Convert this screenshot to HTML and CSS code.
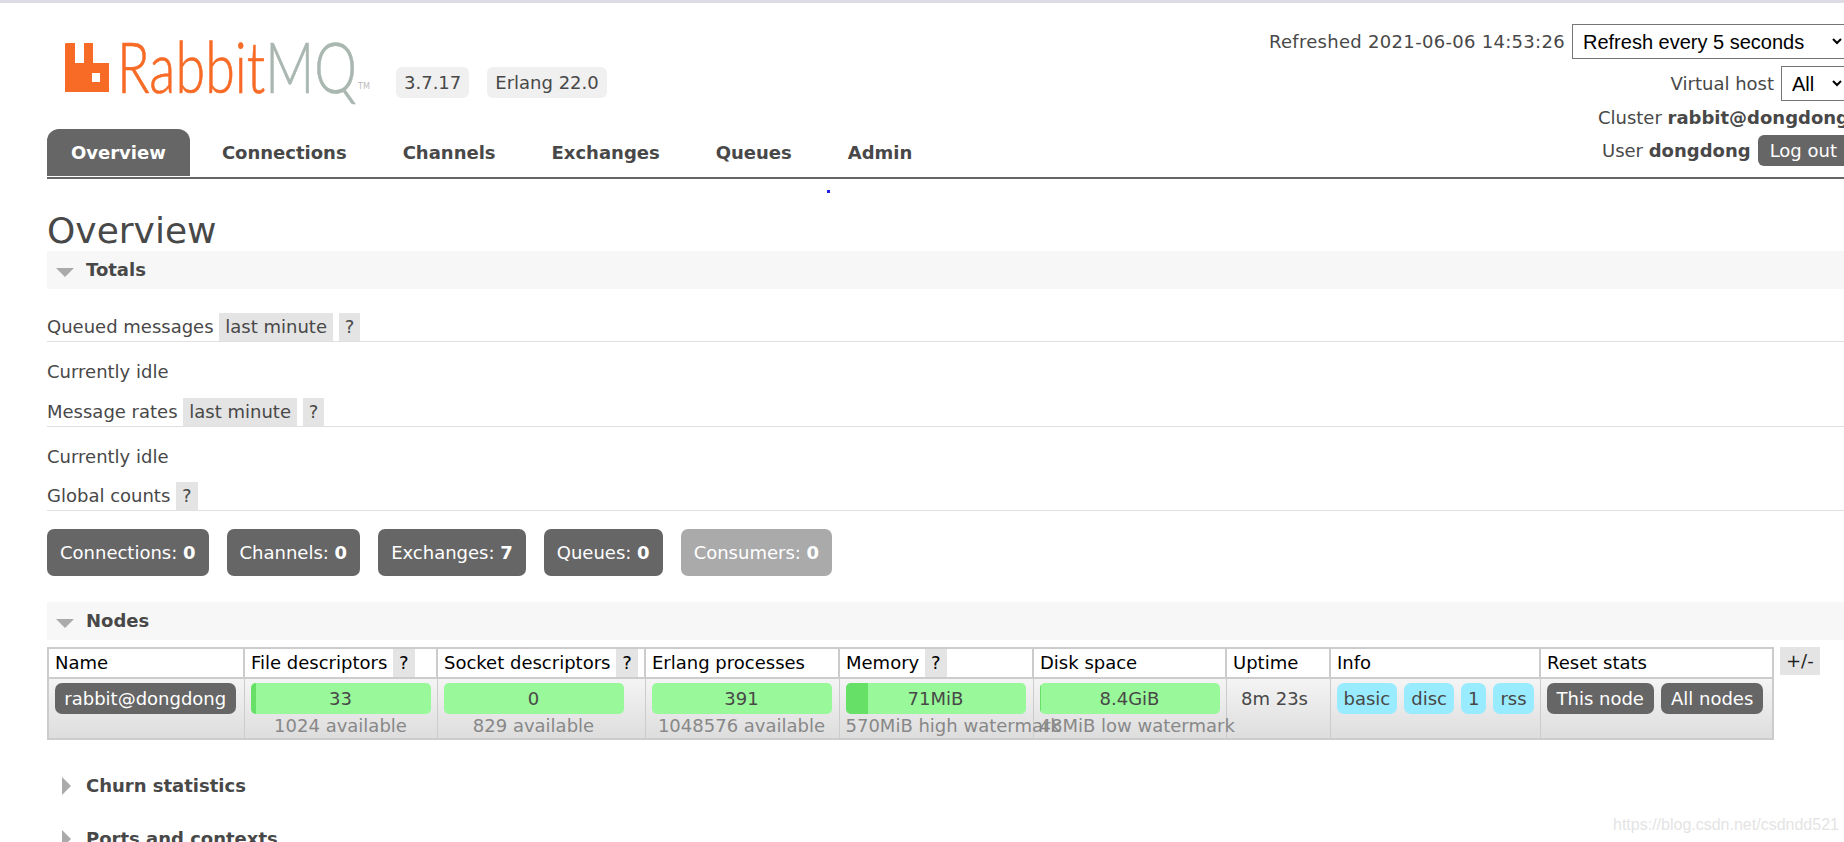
FILE: index.html
```html
<!DOCTYPE html>
<html lang="en">
<head>
    <meta charset="UTF-8">
    <title>RabbitMQ Management</title>
    <link rel="stylesheet" href="styles.css">
</head>
<body>
    <div class="page">
        <div class="header">
            <div class="brand">
                <div class="logo">
                    <svg class="logo-icon" width="44" height="50" viewBox="0 0 44 50">
                        <path fill="#f76b26" fill-rule="evenodd" d="M1 1h9v20h9V1h9v20h16v29H0V2zM27 31v9h8v-9z"/>
                    </svg>
                    <span class="logo-text"><span class="logo-word">Rabbit</span><span class="logo-word logo-mq">MQ</span></span>
                    <span class="logo-tm">TM</span>
                </div>
                <span class="version">3.7.17</span>
                <span class="version">Erlang 22.0</span>
            </div>
            <div class="status">
                <div class="status-row refresh-row">Refreshed 2021-06-06 14:53:26
                    <select class="refresh-select"><option>Refresh every 5 seconds</option></select>
                </div>
                <div class="status-row vhost-row">Virtual host
                    <select class="vhost-select"><option>All</option></select>
                </div>
                <div class="status-row cluster-row"><span>Cluster <b>rabbit@dongdong</b></span></div>
                <div class="status-row user-row"><span>User <b>dongdong</b></span>
                    <button class="logout">Log out</button>
                </div>
            </div>
        </div>

        <ul class="tabs">
            <li class="tab active">Overview</li>
            <li class="tab">Connections</li>
            <li class="tab">Channels</li>
            <li class="tab">Exchanges</li>
            <li class="tab">Queues</li>
            <li class="tab">Admin</li>
        </ul>
        <div class="dot-row"><span class="dot"></span></div>

        <h1>Overview</h1>

        <div class="section-head open">Totals</div>
        <div class="totals">
            <h3 class="sub-head">Queued messages <span class="chip">last minute</span> <span class="chip help">?</span></h3>
            <p class="idle">Currently idle</p>
            <h3 class="sub-head">Message rates <span class="chip">last minute</span> <span class="chip help">?</span></h3>
            <p class="idle">Currently idle</p>
            <h3 class="sub-head">Global counts <span class="chip help">?</span></h3>
            <div class="counts">
                <span class="count">Connections: <b>0</b></span>
                <span class="count">Channels: <b>0</b></span>
                <span class="count">Exchanges: <b>7</b></span>
                <span class="count">Queues: <b>0</b></span>
                <span class="count faded">Consumers: <b>0</b></span>
            </div>
        </div>

        <div class="section-head open">Nodes</div>
        <div class="nodes">
            <table class="node-table">
                <colgroup>
                    <col class="c-name"><col class="c-file"><col class="c-socket"><col class="c-erl">
                    <col class="c-mem"><col class="c-disk"><col class="c-up"><col class="c-info"><col class="c-reset">
                </colgroup>
                <tr>
                    <th>Name</th>
                    <th>File descriptors <span class="chip help">?</span></th>
                    <th>Socket descriptors <span class="chip help">?</span></th>
                    <th>Erlang processes</th>
                    <th>Memory <span class="chip help">?</span></th>
                    <th>Disk space</th>
                    <th>Uptime</th>
                    <th>Info</th>
                    <th>Reset stats</th>
                </tr>
                <tr>
                    <td><span class="node-name">rabbit@dongdong</span></td>
                    <td>
                        <div class="bar"><span class="bar-fill" style="width: 3%"></span><span class="bar-label">33</span></div>
                        <div class="sub">1024 available</div>
                    </td>
                    <td>
                        <div class="bar"><span class="bar-label">0</span></div>
                        <div class="sub">829 available</div>
                    </td>
                    <td>
                        <div class="bar"><span class="bar-label">391</span></div>
                        <div class="sub">1048576 available</div>
                    </td>
                    <td>
                        <div class="bar"><span class="bar-fill" style="width: 12.5%"></span><span class="bar-label">71MiB</span></div>
                        <div class="sub nowrap">570MiB high watermark</div>
                    </td>
                    <td>
                        <div class="bar"><span class="bar-fill" style="width: 0.6%"></span><span class="bar-label">8.4GiB</span></div>
                        <div class="sub nowrap">48MiB low watermark</div>
                    </td>
                    <td class="uptime">8m 23s</td>
                    <td>
                        <div class="tags"><span class="tag">basic</span><span class="tag">disc</span><span class="tag">1</span><span class="tag">rss</span></div>
                    </td>
                    <td>
                        <div class="resets"><button class="reset">This node</button><button class="reset">All nodes</button></div>
                    </td>
                </tr>
            </table>
            <span class="chip columns">+/-</span>
        </div>

        <div class="section-head closed">Churn statistics</div>
        <div class="section-head closed">Ports and contexts</div>
    </div>
    <div class="watermark">https://blog.csdn.net/csdndd521</div>
</body>
</html>
```

FILE: styles.css
```css
* {
    box-sizing: border-box;
    margin: 0;
    padding: 0;
}

html, body {
    height: 842px;
    overflow: hidden;
}

body {
    background: #fff;
    border-top: 3px solid #dcdce4;
    color: #484848;
    font-family: "DejaVu Sans", sans-serif;
    font-size: 18px;
    position: relative;
}

.page {
    width: 1849px;
    padding-left: 47px;
}

/* header */
.header {
    display: flex;
    justify-content: space-between;
    height: 107px;
}

.brand {
    display: flex;
    align-items: flex-start;
    padding: 39px 0 0 18px;
}

.logo {
    display: flex;
    align-items: flex-start;
    width: 331px;
    height: 52px;
    position: relative;
}

.logo-icon {
    flex: none;
    margin-right: 8px;
}

.logo-text {
    display: block;
    white-space: nowrap;
    transform: scaleX(0.77);
    transform-origin: left top;
    margin-top: -1px;
}

.logo-word {
    font-family: "Lato", sans-serif;
    font-weight: 300;
    font-size: 70px;
    line-height: 50px;
    color: #f76b26;
    -webkit-text-stroke: 0.7px #f76b26;
}

.logo-word.logo-mq {
    color: #a9b7b0;
    -webkit-text-stroke: 0.7px #a9b7b0;
}

.logo-tm {
    font-size: 8px;
    line-height: 10px;
    color: #bbb;
    position: absolute;
    left: 293px;
    top: 40px;
}

.version {
    background: #f0f0f0;
    border-radius: 6px;
    height: 31px;
    line-height: 31px;
    padding: 0 8px;
    margin: 25px 18px 0 0;
    white-space: nowrap;
}

.status {
    display: flex;
    flex-direction: column;
    align-items: flex-end;
    padding-top: 21px;
}

.status-row {
    display: flex;
    flex: none;
    align-items: center;
    height: 35px;
    white-space: nowrap;
}

.refresh-row {
    letter-spacing: 0.3px;
}

.vhost-row {
    margin-top: 7px;
}

.cluster-row {
    height: 28px;
    margin-top: 2px;
}

.user-row {
    height: 31px;
    margin-top: 4px;
}

.status-row select {
    font-family: "Liberation Sans", sans-serif;
    font-size: 20px;
    letter-spacing: 0;
    color: #000;
    background: #fff;
    border: 1px solid #767676;
    border-radius: 0;
    height: 35px;
    padding-left: 6px;
    margin-left: 7px;
    margin-right: 3px;
}

.refresh-select {
    width: 274px;
}

.vhost-select {
    width: 65px;
}

.logout {
    background: #666;
    color: #fff;
    border: 0;
    border-radius: 6px;
    font: 18px "DejaVu Sans", sans-serif;
    height: 31px;
    padding: 0 12px;
    margin-left: 7px;
}

/* tabs */
.tabs {
    display: flex;
    list-style: none;
    height: 50px;
    border-bottom: 2px solid #666;
    margin-top: 19px;
    margin-right: 5px;
}

.tab {
    font-weight: bold;
    padding: 0 24px;
    margin-right: 8px;
    line-height: 48px;
    color: #484848;
}

.tab.active {
    background: #666;
    color: #fff;
    border-radius: 12px 12px 0 0;
    height: 47px;
}

.dot-row {
    height: 26px;
    position: relative;
}

.dot {
    position: absolute;
    left: 780px;
    top: 11px;
    width: 3px;
    height: 3px;
    background: #2020e0;
}

h1 {
    font-weight: normal;
    font-size: 36px;
    line-height: 40px;
    padding-top: 6px;
    color: #484848;
}

/* sections */
.section-head {
    font-weight: bold;
    height: 38px;
    line-height: 38px;
    padding-left: 39px;
    position: relative;
}

.section-head.open {
    background: #f7f7f7;
}

.section-head.open::before {
    content: "";
    position: absolute;
    left: 9px;
    top: 17px;
    border-left: 9px solid transparent;
    border-right: 9px solid transparent;
    border-top: 9px solid #aaa;
}

.section-head.closed::before {
    content: "";
    position: absolute;
    left: 15px;
    top: 10px;
    border-top: 9px solid transparent;
    border-bottom: 9px solid transparent;
    border-left: 9px solid #aaa;
}

.totals {
    padding-top: 24px;
}

.sub-head {
    font-weight: normal;
    font-size: 18px;
    height: 29px;
    line-height: 28px;
    border-bottom: 1px solid #e0e0e0;
}

.chip {
    display: inline-block;
    background: #e4e4e4;
    height: 28px;
    line-height: 28px;
    padding: 0 6px;
}

.idle {
    height: 42.5px;
    line-height: 60px;
    margin-bottom: 13px;
}

.counts {
    display: flex;
    gap: 18px;
    margin-top: 18px;
    margin-bottom: 26px;
}

.count {
    background: #666;
    color: #fff;
    border-radius: 7px;
    height: 47px;
    line-height: 47px;
    padding: 0 13px;
    white-space: nowrap;
}

.count.faded {
    background: #aaa;
}

/* nodes table */
.nodes {
    display: flex;
    align-items: flex-start;
    margin-top: 7px;
    margin-bottom: 27px;
}

.node-table {
    width: 1725px;
    table-layout: fixed;
    border-collapse: collapse;
    border: 2px solid #ccc;
}

.c-name { width: 196px; }
.c-file { width: 193px; }
.c-socket { width: 208px; }
.c-erl { width: 194px; }
.c-mem { width: 194px; }
.c-disk { width: 193px; }
.c-up { width: 104px; }
.c-info { width: 210px; }
.c-reset { width: 233px; }

.node-table th {
    font-weight: normal;
    color: #000;
    text-align: left;
    height: 29px;
    line-height: 28px;
    padding: 0 6px;
    white-space: nowrap;
    border: 1px solid #ccc;
    border-width: 0 2px 2px 0;
}

.node-table th .chip {
    vertical-align: top;
}

.node-table td {
    height: 59px;
    vertical-align: top;
    padding: 4px 6px 0;
    border-right: 1px solid #ccc;
    background: linear-gradient(#f4f4f4, #dddddd);
}

.node-name {
    display: block;
    background: #666;
    color: #fff;
    border-radius: 7px;
    height: 31px;
    line-height: 31px;
    margin-right: 2px;
    text-align: center;
}

.bar {
    background: #99f899;
    border-radius: 5px;
    width: 180px;
    height: 31px;
    line-height: 31px;
    text-align: center;
    position: relative;
    overflow: hidden;
}

.bar-fill {
    position: absolute;
    left: 0;
    top: 0;
    bottom: 0;
    background: #66e066;
}

.bar-label {
    position: relative;
}

.sub {
    color: #888;
    width: 180px;
    text-align: center;
    white-space: nowrap;
    line-height: 24px;
}

.sub.nowrap {
    text-align: left;
}

.node-table .uptime {
    text-align: center;
    line-height: 31px;
    padding-right: 13px;
}

.tags {
    display: flex;
    gap: 7px;
}

.tag {
    background: #99ebff;
    border-radius: 7px;
    height: 31px;
    line-height: 31px;
    padding: 0 7px;
}

.resets {
    display: flex;
    gap: 7px;
}

.reset {
    background: #666;
    color: #fff;
    border: 0;
    border-radius: 7px;
    height: 31px;
    font: 18px "DejaVu Sans", sans-serif;
    padding: 0 10px;
    white-space: nowrap;
}

.chip.columns {
    margin-left: 6px;
    height: 28px;
    padding: 0 6px;
    color: #222;
}

.section-head.closed {
    margin-bottom: 15px;
}

.watermark {
    position: absolute;
    left: 1613px;
    top: 813px;
    color: #e4e4e4;
    font-family: "Liberation Sans", sans-serif;
    font-size: 16px;
}
```
